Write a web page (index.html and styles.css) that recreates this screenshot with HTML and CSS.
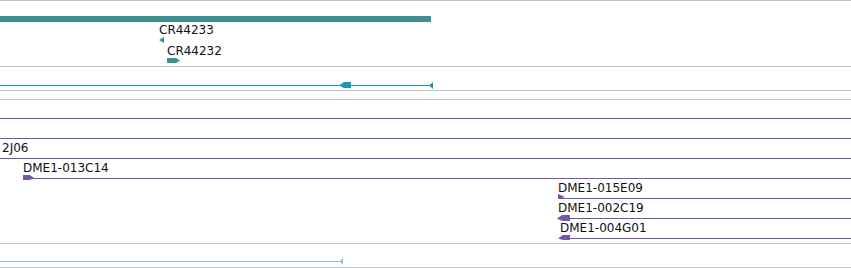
FILE: index.html
```html
<!DOCTYPE html>
<html lang="en">
<head>
    <meta charset="UTF-8">
    <title>Genome Browser Tracks</title>
    <link rel="stylesheet" href="styles.css">
</head>
<body>
    <div class="tracks">
        <!-- gene span + ncRNA features -->
        <div class="track track-genes">
            <svg class="glyphs" width="851" height="65">
                <rect class="teal" x="0" y="15" width="431" height="6"/>
                <polygon class="teal" points="159,39 164,36 164,42"/>
                <polygon class="teal" points="167,57 176,57 180,59.5 176,62 167,62"/>
            </svg>
            <span class="label" style="left:159px; top:23px">CR44233</span>
            <span class="label" style="left:167px; top:44px">CR44232</span>
        </div>

        <!-- transcript -->
        <div class="track track-transcript">
            <svg class="glyphs" width="851" height="23">
                <rect class="blue" x="0" y="18" width="432" height="1"/>
                <polygon class="blue" points="339,18.5 344,15 351,15 351,21 344,21"/>
                <polygon class="blue" points="429,18.5 433,15 433,22"/>
            </svg>
        </div>

        <div class="track track-empty"></div>

        <!-- BAC clones -->
        <div class="track track-clones">
            <svg class="glyphs" width="851" height="143">
                <rect class="purple" x="0" y="18" width="851" height="1"/>
                <rect class="purple" x="0" y="38" width="851" height="1"/>
                <rect class="purple" x="0" y="58" width="851" height="1"/>
                <rect class="purple" x="30" y="78" width="821" height="1"/>
                <polygon class="purple" points="23,75 30,75 34,78 30,80 23,80"/>
                <rect class="purple" x="558" y="98" width="293" height="1"/>
                <polygon class="purple" points="558,94 565,97 558,99"/>
                <rect class="purple" x="566" y="118" width="285" height="1"/>
                <polygon class="purple" points="557,118.5 562,115 570,115 570,121 562,121"/>
                <rect class="purple" x="566" y="138" width="285" height="1"/>
                <polygon class="purple" points="558,138.5 563,135 570,135 570,140 563,140"/>
            </svg>
            <span class="label" style="left:2px; top:42px">2J06</span>
            <span class="label" style="left:23px; top:62px">DME1-013C14</span>
            <span class="label" style="left:558px; top:82px">DME1-015E09</span>
            <span class="label" style="left:558px; top:102px">DME1-002C19</span>
            <span class="label" style="left:560px; top:122px">DME1-004G01</span>
        </div>

        <!-- aligned reads -->
        <div class="track track-reads">
            <svg class="glyphs" width="851" height="23">
                <rect class="light" x="0" y="17" width="341" height="1"/>
                <polygon class="light" points="340,17.5 343,14 343,21"/>
            </svg>
        </div>

        <div class="track track-end"></div>
    </div>
</body>
</html>
```

FILE: styles.css
```css
html, body {
    margin: 0;
    padding: 0;
    background: #fff;
}
.tracks {
    width: 851px;
    height: 268px;
    overflow: hidden;
}
.track {
    position: relative;
    border-top: 1px solid #c4c4c4;
}
.track-genes {
    height: 65px;
}
.track-transcript {
    height: 23px;
}
.track-empty {
    height: 8px;
}
.track-clones {
    height: 143px;
}
.track-reads {
    height: 23px;
}
.track-end {
    height: 0;
}
.glyphs {
    position: absolute;
    top: 0;
    left: 0;
    display: block;
}
.label {
    position: absolute;
    font-family: "DejaVu Sans", "Liberation Sans", sans-serif;
    font-size: 12px;
    line-height: 12px;
    color: #111;
    white-space: nowrap;
}
.teal {
    fill: #408f91;
}
.blue {
    fill: #1598ba;
}
.purple {
    fill: #7656a8;
}
.light {
    fill: #8bbadb;
}
```
